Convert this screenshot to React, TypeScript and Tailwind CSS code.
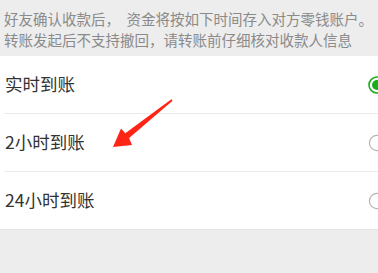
import React from 'react';

const options = [
  { id: 'now', label: '实时到账', selected: true },
  { id: '2h', label: '2小时到账', selected: false },
  { id: '24h', label: '24小时到账', selected: false },
];

function Radio({ on }: { on: boolean }) {
  return on ? (
    <svg width="18" height="18" viewBox="0 0 18 18" className="shrink-0 -mr-[8px]">
      <circle cx="9" cy="9" r="8" fill="none" stroke="#1aad19" strokeWidth="1.6" />
      <circle cx="9" cy="9" r="5" fill="#1aad19" />
    </svg>
  ) : (
    <svg width="18" height="18" viewBox="0 0 18 18" className="shrink-0 -mr-[8px]">
      <circle cx="9" cy="9" r="7.6" fill="none" stroke="#b5b5b5" strokeWidth="1.2" />
    </svg>
  );
}

export default function App() {
  return (
    <div
      className="relative w-[378px] h-[273px] overflow-hidden bg-[#ededed]"
      style={{ fontFamily: '"Noto Sans CJK SC", "Noto Sans", sans-serif' }}
    >
      <div className="px-1 pt-[8px] pb-[6px] text-[14.5px] leading-[21px] text-[#8a8a8a] whitespace-nowrap">
        <p>好友确认收款后，&nbsp;&nbsp;资金将按如下时间存入对方零钱账户。</p>
        <p>转账发起后不支持撤回，请转账前仔细核对收款人信息</p>
      </div>

      <div className="bg-white border-b border-[#e4e4e4]">
        {options.map((o, i) => (
          <div key={o.id} className={i > 0 ? 'ml-1 border-t border-[#ebebeb]' : 'ml-1'}>
            <div className="h-[57px] flex items-center justify-between pl-[1px] text-[17.5px] text-[#333]">
              <span>{o.label}</span>
              <Radio on={o.selected} />
            </div>
          </div>
        ))}
      </div>

      <svg className="absolute left-0 top-0 pointer-events-none" width="378" height="273">
        <polygon
          points="171.4,99.2 125.3,133.3 121,128.5 113,147 132,145 129.1,138.1 172.6,100.8"
          fill="#ff2516"
        />
      </svg>
    </div>
  );
}
